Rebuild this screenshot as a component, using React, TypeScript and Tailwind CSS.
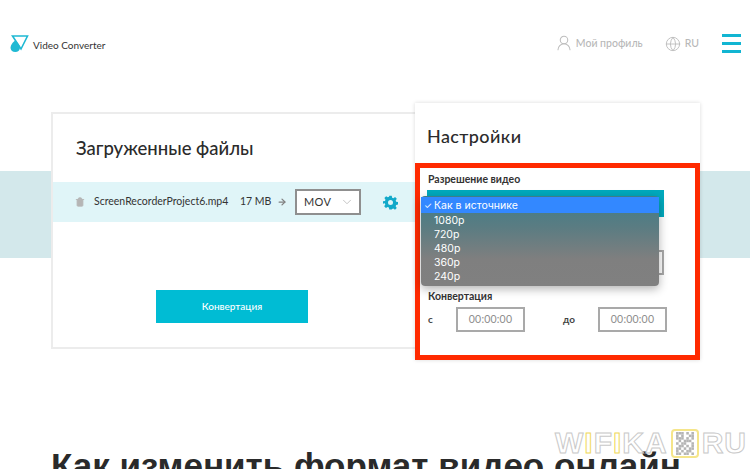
import { ArrowRight, ChevronDown, Globe, Trash2, UserRound } from "lucide-react";

const sans = "font-['Lato','Noto_Sans',sans-serif]";

function Logo() {
  return (
    <svg width="19" height="18" viewBox="0 0 19 18" className="shrink-0">
      <path d="M2.5 1 H17.5 L11 14 Z" fill="none" stroke="#1fb9d3" strokeWidth="1.6" />
      <path d="M5 5.5 C7 7 10 10 10 13 A4.8 4.8 0 0 1 0.5 13 C0.5 10 3 7 5 5.5 Z" fill="#1fb9d3" />
    </svg>
  );
}

function Gear() {
  return (
    <svg width="15" height="15" viewBox="0 0 24 24" fill="#12a9c9">
      <path
        fillRule="evenodd"
        d="M10 1h4l.6 3.2 2 .8 2.7-1.8 2.8 2.8-1.8 2.7.8 2 3.1.6v4l-3.2.6-.8 2 1.8 2.7-2.8 2.8-2.7-1.8-2 .8L14 23h-4l-.6-3.2-2-.8-2.7 1.8-2.8-2.8 1.8-2.7-.8-2L0 14v-4l3.2-.6.8-2L2.2 4.7 5 1.9l2.7 1.8 2-.8L10 1Zm2 7a4 4 0 1 0 0 8 4 4 0 0 0 0-8Z"
      />
    </svg>
  );
}

function QrMark() {
  const cells = [
    "1110101", "1010011", "1110101", "0101110", "1011001", "0110101", "1101011", "1010110", "1101101",
  ];
  return (
    <div className="flex flex-col justify-center items-center w-[28px] h-[29px] border-2 border-[#f5e58a] rounded-[4px] mx-[3px]">
      <svg width="18" height="23" viewBox="0 0 7 9">
        {cells.map((row, y) =>
          row.split("").map((c, x) => (c === "1" ? <rect key={`${x}-${y}`} x={x} y={y} width="1" height="1" fill="#b5b5b5" /> : null))
        )}
      </svg>
    </div>
  );
}

function TimeField() {
  return (
    <div className="w-[69px] h-[25px] border-2 border-[#a9a9a9] flex items-center justify-center text-[10.5px] font-normal text-[#8d8d8d] tracking-[0.2px]">
      00:00:00
    </div>
  );
}

export default function App() {
  const resolutions = ["1080p", "720p", "480p", "360p", "240p"];

  return (
    <div className={`relative w-[750px] h-[469px] overflow-hidden bg-white text-[#2a2a2a] ${sans}`}>
      <header className="flex items-center h-[88px] pl-[10px] pr-[9px]">
        <Logo />
        <span className="ml-[4px] mt-[3px] text-[10px] text-[#333]">Video Converter</span>
        <div className="ml-auto flex items-center text-[10.5px] text-[#b8b8b8]">
          <UserRound size={18} strokeWidth={1.4} className="text-[#bdbdbd] -mt-[3px]" />
          <span className="ml-[3px] font-medium">Мой профиль</span>
          <Globe size={16} strokeWidth={1.4} className="ml-[22px] text-[#bdbdbd]" />
          <span className="ml-[4px] font-medium">RU</span>
          <div className="ml-[23px] w-[19px] flex flex-col gap-[5px] -mt-[2px]">
            <div className="h-[3px] bg-[#12b5d2]" />
            <div className="h-[3px] bg-[#12b5d2]" />
            <div className="h-[3px] bg-[#12b5d2]" />
          </div>
        </div>
      </header>

      {/* light band behind the cards */}
      <div className="absolute left-0 right-0 top-[171px] h-[87px] bg-[#d3e8eb]" />

      <main className="relative flex items-start pt-[15px] pl-[51px]">
        <section className="mt-[9px] w-[364px] h-[237px] bg-white border-2 border-r-0 border-[#ececec]">
          <h2 className="pl-[23px] pt-[23px] text-[18.5px] leading-[22px] font-medium text-[#2b2b2b]">Загруженные файлы</h2>
          <div className="mt-[23px] h-[40px] bg-[#e0f5f8] flex items-center pl-[22px] text-[10.5px] text-[#333]">
            <Trash2 size={10} fill="#b5b5b5" className="text-[#b5b5b5]" />
            <span className="ml-[9px] w-[146px]">ScreenRecorderProject6.mp4</span>
            <span className="w-[37px]">17 MB</span>
            <ArrowRight size={10} strokeWidth={3} className="text-[#808080] mr-[8px]" />
            <div className="w-[66px] h-[26px] bg-white border-2 border-[#8f8f8f] flex items-center justify-between pl-[7px] pr-[5px] text-[11px] tracking-[0.3px]">
              MOV
              <ChevronDown size={14} strokeWidth={1.5} className="text-[#bdbdbd]" />
            </div>
            <div className="ml-[22px]">
              <Gear />
            </div>
          </div>
          <div className="mt-[68px] ml-[103px] w-[152px] h-[33px] bg-[#00bcd4] flex items-center justify-center text-[10px] text-white font-medium">
            Конвертация
          </div>
        </section>

        <section className="w-[285px] h-[257px] bg-white shadow-[0_0_4px_rgba(0,0,0,0.15)]">
          <h2 className="h-[60px] pl-[12px] pt-[21px] text-[18px] leading-[24px] font-medium tracking-[0.4px] text-[#2b2b2b]">Настройки</h2>
          <div className="relative h-[197px] border-[5px] border-[#ff2a00] pl-[7px] pt-[5px]">
            <div className="pl-[1px] text-[10.5px] leading-[13px] font-bold text-[#333]">Разрешение видео</div>
            <div className="mt-[4px] w-[237px] h-[27px] bg-[#00a9bd]" />
            <div className="mt-[33px] w-[237px] h-[25px] border-2 border-[#a9a9a9]" />
            <div className="mt-[15px] pl-[1px] text-[10.5px] leading-[13px] font-bold text-[#333]">Конвертация</div>
            <div className="mt-[4px] flex items-center pl-[1px] text-[10px] font-bold text-[#444]">
              <span className="w-[28px]">с</span>
              <TimeField />
              <span className="ml-[38px] w-[35px]">до</span>
              <TimeField />
            </div>

            {/* native select popup */}
            <div className="absolute left-[1px] top-[28px] w-[238px] h-[90px] rounded-[4px] py-[1px] bg-[linear-gradient(180deg,#3f7d88_0%,#5b7c82_35%,#7f7f7f_70%,#808080_100%)] shadow-[0_3px_10px_rgba(0,0,0,0.3)] font-['Inter',sans-serif] text-[10.5px] text-white">
              <div className="relative h-[16px] bg-[#3388ff] pl-[13px] leading-[18px]">
                <span className="absolute left-[3px] text-[9px]">✓</span>
                Как в источнике
              </div>
              {resolutions.map((r) => (
                <div key={r} className="h-[14px] pl-[13px] leading-[16px]">
                  {r}
                </div>
              ))}
            </div>
          </div>
        </section>
      </main>

      <h1 className="absolute left-[51px] top-[445px] whitespace-nowrap font-['Liberation_Sans',sans-serif] font-bold text-[35px] leading-[42px] text-[#2a2a2a]">
        Как изменить формат видео онлайн
      </h1>

      {/* site watermark */}
      <div className="absolute left-[555px] top-[428px] flex items-center font-['Liberation_Sans',sans-serif] font-bold text-[30px] leading-[30px] tracking-[1px] text-transparent [-webkit-text-stroke:1px_#c9c9c9]">
        <span>W</span>
        <span className="[-webkit-text-stroke:1px_#f0d95c]">I</span>
        <span>F</span>
        <span className="[-webkit-text-stroke:1px_#f0d95c]">I</span>
        <span>KA</span>
        <QrMark />
        <span>RU</span>
      </div>
    </div>
  );
}
